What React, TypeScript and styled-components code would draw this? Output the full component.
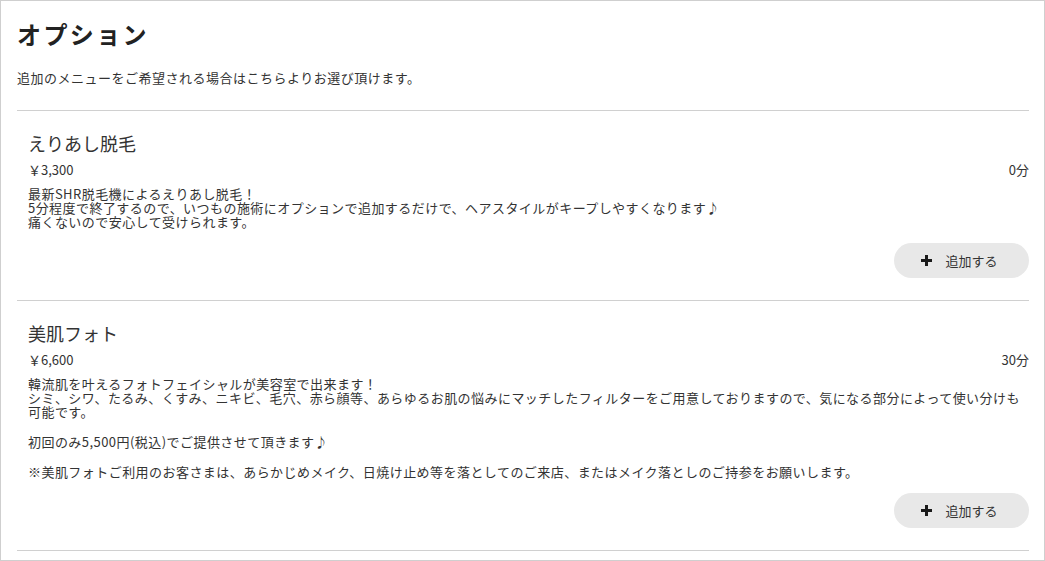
import styled, { createGlobalStyle } from "styled-components";

interface OptionItem {
  name: string;
  price: string;
  duration: string;
  paragraphs: string[][];
}

const options: OptionItem[] = [
  {
    name: "えりあし脱毛",
    price: "￥3,300",
    duration: "0分",
    paragraphs: [
      [
        "最新SHR脱毛機によるえりあし脱毛！",
        "5分程度で終了するので、いつもの施術にオプションで追加するだけで、ヘアスタイルがキープしやすくなります♪",
        "痛くないので安心して受けられます。",
      ],
    ],
  },
  {
    name: "美肌フォト",
    price: "￥6,600",
    duration: "30分",
    paragraphs: [
      [
        "韓流肌を叶えるフォトフェイシャルが美容室で出来ます！",
        "シミ、シワ、たるみ、くすみ、ニキビ、毛穴、赤ら顔等、あらゆるお肌の悩みにマッチしたフィルターをご用意しておりますので、気になる部分によって使い分けも可能です。",
      ],
      ["初回のみ5,500円(税込)でご提供させて頂きます♪"],
      [
        "※美肌フォトご利用のお客さまは、あらかじめメイク、日焼け止め等を落としてのご来店、またはメイク落としのご持参をお願いします。",
      ],
    ],
  },
];

const PlusIcon = () => (
  <svg width="11" height="11" viewBox="0 0 11 11" aria-hidden="true">
    <rect x="4" y="0" width="3" height="11" fill="#1a1a1a" />
    <rect x="0" y="4" width="11" height="3" fill="#1a1a1a" />
  </svg>
);

const App = () => {
  return (
    <>
      <GlobalStyle />
      <Frame>
        <PageTitle>オプション</PageTitle>
        <Lead>追加のメニューをご希望される場合はこちらよりお選び頂けます。</Lead>
        <List>
          {options.map((option, index) => (
            <Item key={index}>
              <ItemName>{option.name}</ItemName>
              <PriceRow>
                <span>{option.price}</span>
                <span>{option.duration}</span>
              </PriceRow>
              <Description>
                {option.paragraphs.map((lines, i) => (
                  <Paragraph key={i}>
                    {lines.map((line, j) => (
                      <span key={j}>
                        {j > 0 && <br />}
                        {line}
                      </span>
                    ))}
                  </Paragraph>
                ))}
              </Description>
              <Actions>
                <AddButton type="button">
                  <PlusIcon />
                  追加する
                </AddButton>
              </Actions>
            </Item>
          ))}
        </List>
      </Frame>
    </>
  );
};

const GlobalStyle = createGlobalStyle`
  * {
    box-sizing: border-box;
  }

  body {
    margin: 0;
    background: #fff;
    font-family: "Noto Sans CJK JP", "Noto Sans", sans-serif;
    color: #333;
  }
`;

const Frame = styled.div`
  width: 1045px;
  height: 561px;
  overflow: hidden;
  border: 1px solid #cfcfcf;
  padding: 0 15px 0 16px;
`;

const PageTitle = styled.h1`
  margin: 17px 0 0;
  font-size: 24px;
  line-height: 32px;
  font-weight: 700;
  letter-spacing: 2.4px;
  color: #222;
`;

const Lead = styled.p`
  margin: 19px 0 0;
  font-size: 13px;
  line-height: 18px;
  letter-spacing: 0.5px;
  color: #333;
`;

const List = styled.div`
  margin-top: 23px;
  border-top: 1px solid #d0d0d0;
  display: flex;
  flex-direction: column;
`;

const Item = styled.div`
  padding: 20px 0 22px 11px;
  border-bottom: 1px solid #d0d0d0;
  display: flex;
  flex-direction: column;
`;

const ItemName = styled.h2`
  margin: 0;
  font-size: 18px;
  line-height: 24px;
  font-weight: 400;
  letter-spacing: 0;
  color: #333;
`;

const PriceRow = styled.div`
  margin-top: 6px;
  display: flex;
  justify-content: space-between;
  font-size: 13px;
  line-height: 18px;
  color: #333;
`;

const Description = styled.div`
  margin-top: 8px;
  display: flex;
  flex-direction: column;
  gap: 16px;
`;

const Paragraph = styled.p`
  margin: 0;
  font-size: 13px;
  line-height: 14px;
  letter-spacing: 0.45px;
  color: #333;
`;

const Actions = styled.div`
  margin-top: 14px;
  display: flex;
  justify-content: flex-end;
`;

const AddButton = styled.button`
  width: 135px;
  height: 35px;
  border: none;
  border-radius: 18px;
  background: #e8e8e8;
  display: flex;
  align-items: center;
  justify-content: center;
  gap: 13px;
  font-family: inherit;
  font-size: 13px;
  color: #333;
  cursor: pointer;
  padding: 0 4px 0 0;
`;

export default App;
